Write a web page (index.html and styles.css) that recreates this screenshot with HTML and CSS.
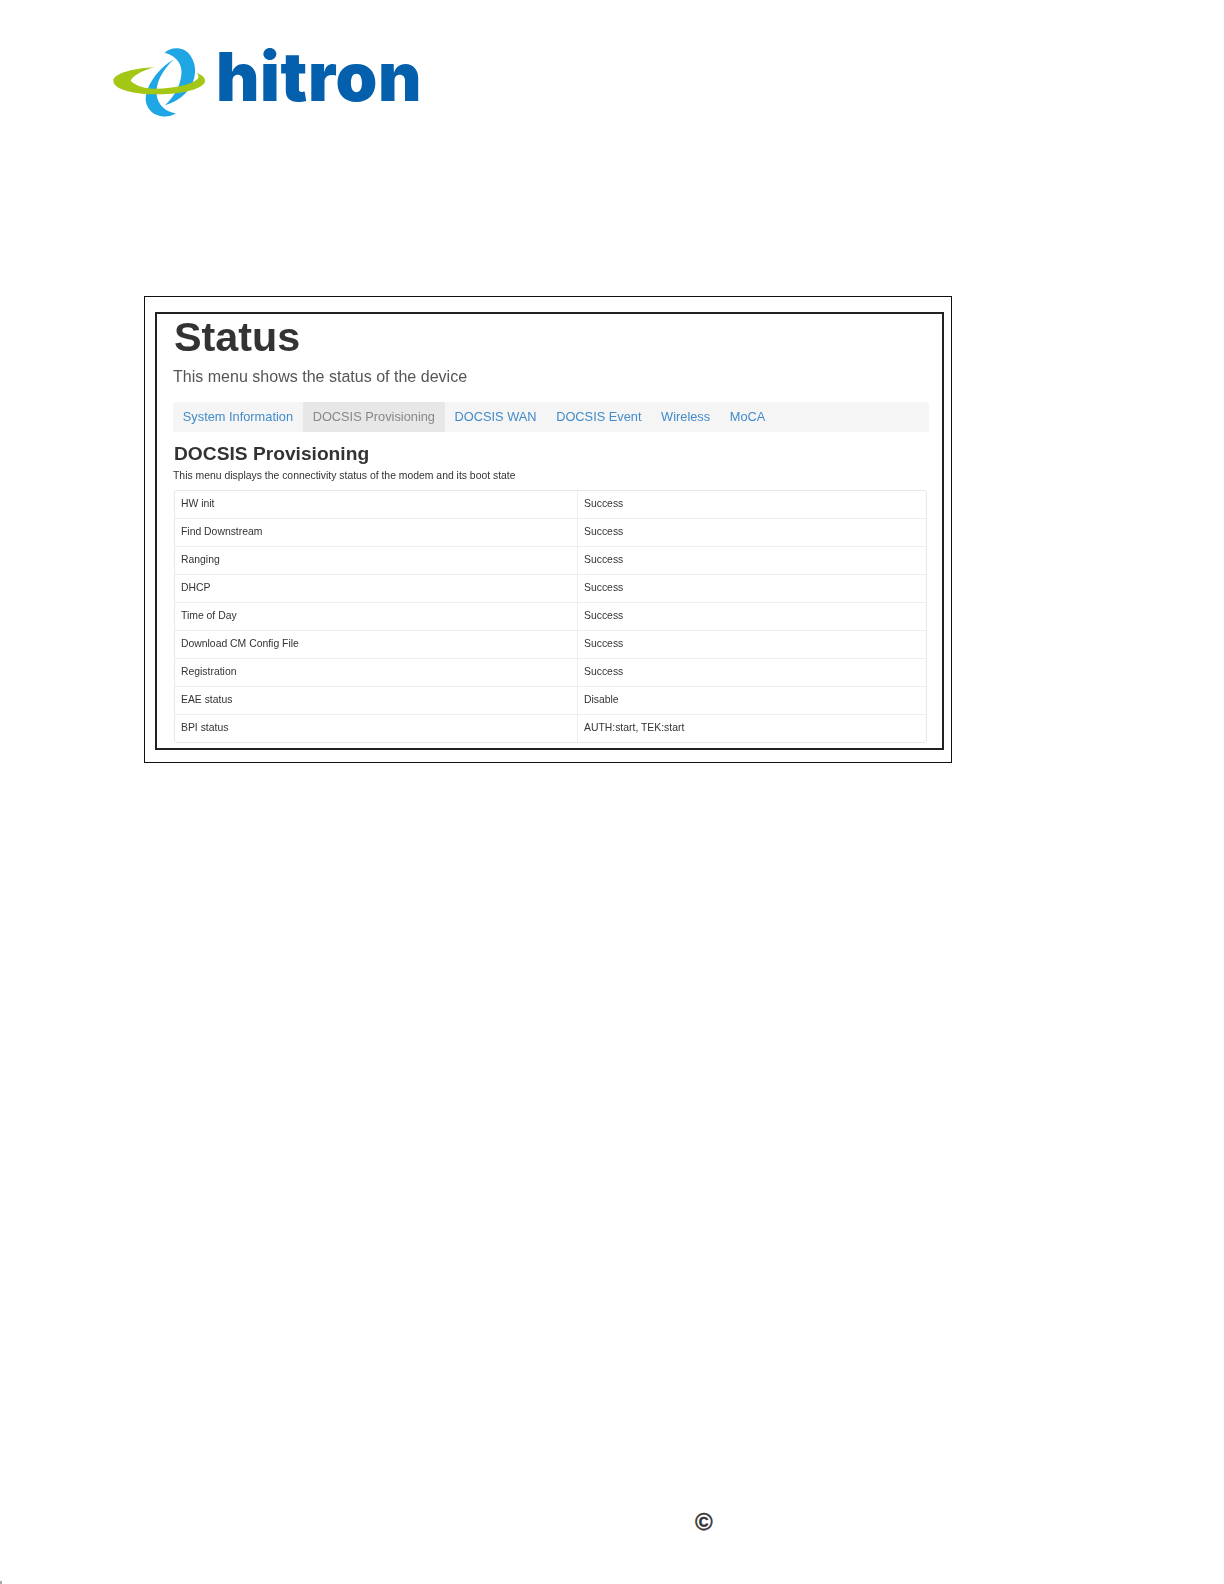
FILE: index.html
```html
<!DOCTYPE html>
<html lang="en">
<head>
<meta charset="utf-8">
<title>Hitron Status</title>
<link rel="stylesheet" href="styles.css">
</head>
<body>
<div class="page">
  <header class="logo">
    <svg class="logo-mark" viewBox="30 45 300 225" aria-hidden="true">
      <path class="blue" d="M194 68C212 50 254 48 272 78C289 104 289 134 276 162C262 192 230 216 195 226C222 200 240 170 244 135C248 105 232 78 194 68Z"/>
      <path class="blue" d="M222 88C180 112 146 155 138 195C131 234 163 264 203 259C212 258 220 255 227 250C198 246 174 226 170 195C166 160 187 120 222 88Z"/>
      <path class="green" d="M165 112C105 114 40 130 40 152C40 180 110 194 175 193C250 192 315 175 315 152C315 142 305 134 290 128C298 136 298 145 286 152C262 166 215 175 170 176C135 176 108 168 92 152C100 136 130 120 165 112Z"/>
    </svg>
    <span class="logo-word">hitron</span>
  </header>
  <main class="frame">
    <section class="inner">
      <h1 class="title">Status</h1>
      <p class="lead">This menu shows the status of the device</p>
      <nav class="tabs">
        <a class="tab">System Information</a>
        <a class="tab tab-active">DOCSIS Provisioning</a>
        <a class="tab">DOCSIS WAN</a>
        <a class="tab">DOCSIS Event</a>
        <a class="tab">Wireless</a>
        <a class="tab">MoCA</a>
      </nav>
      <h2 class="heading">DOCSIS Provisioning</h2>
      <p class="note">This menu displays the connectivity status of the modem and its boot state</p>
      <table class="grid">
        <tbody>
          <tr><td>HW init</td><td>Success</td></tr>
          <tr><td>Find Downstream</td><td>Success</td></tr>
          <tr><td>Ranging</td><td>Success</td></tr>
          <tr><td>DHCP</td><td>Success</td></tr>
          <tr><td>Time of Day</td><td>Success</td></tr>
          <tr><td>Download CM Config File</td><td>Success</td></tr>
          <tr><td>Registration</td><td>Success</td></tr>
          <tr><td>EAE status</td><td>Disable</td></tr>
          <tr><td>BPI status</td><td>AUTH:start, TEK:start</td></tr>
        </tbody>
      </table>
    </section>
  </main>
  <footer class="footer"><span class="copy">©</span></footer>
  <div class="sliver"></div>
</div>
</body>
</html>
```
FILE: styles.css
```css
* { box-sizing: border-box; }
html, body { margin: 0; padding: 0; background: #fff; }
body { font-family: "Liberation Sans", Arial, sans-serif; color: #333; }
.page { width: 1224px; height: 1584px; display: flex; flex-direction: column; overflow: hidden; }

.logo { display: flex; align-items: flex-start; height: 100px; margin: 30px 0 0 110px; }
.logo-mark { width: 100px; height: 75px; margin-top: 15px; flex: none; }
.blue { fill: #1ea7e4; }
.green { fill: #a4c614; }
.logo-word { font-family: Inter, "Liberation Sans", sans-serif; font-weight: 900; font-size: 67px; line-height: 84px; letter-spacing: 0.6px; color: #0460ad; margin: 5px 0 0 6px; }

.frame { width: 808px; height: 467px; margin: 166px 0 0 144px; border: 1px solid #111; padding: 15px 7px 12px 10px; }
.inner { height: 100%; border: 2px solid #222; padding: 0 13px 0 16px; }

.title, .lead, .tabs, .heading, .note, .grid { filter: blur(0.3px); }
.title { margin: 0 0 0 1px; font-size: 41.3px; line-height: 46px; font-weight: 700; color: #333; }
.lead { margin: 4px 0 0; font-size: 16.05px; line-height: 24px; color: #555; }
.tabs { display: flex; height: 30px; margin-top: 14px; background: #f5f5f5; border-radius: 3px; }
.tab { padding: 0 9.8px; font-size: 12.8px; line-height: 30px; color: #428bca; }
.tab-active { background: #e7e7e7; color: #888; }
.heading { margin: 10px 0 0 1px; font-size: 19.2px; line-height: 24px; font-weight: 700; color: #333; }
.note { margin: 3px 0 0; font-size: 10.4px; line-height: 14px; color: #333; }

.grid { width: 753px; margin: 7px 0 0 1px; border: 1px solid #e8e8e8; border-radius: 3px; border-spacing: 0; table-layout: fixed; }
.grid td { height: 28px; padding: 0 6px 2px; font-size: 10.4px; color: #333; border-top: 1px solid #eee; }
.grid tr:first-child td { border-top: 0; height: 27px; }
.grid td:first-child { width: 403px; border-right: 1px solid #eee; }

.footer { margin-top: auto; padding-left: 695px; height: 73px; }
.copy { font-size: 24px; line-height: 28px; font-weight: 700; color: #333; -webkit-text-stroke: 0.4px #333; }
.sliver { width: 2px; height: 3px; background: #aaa; }
```
